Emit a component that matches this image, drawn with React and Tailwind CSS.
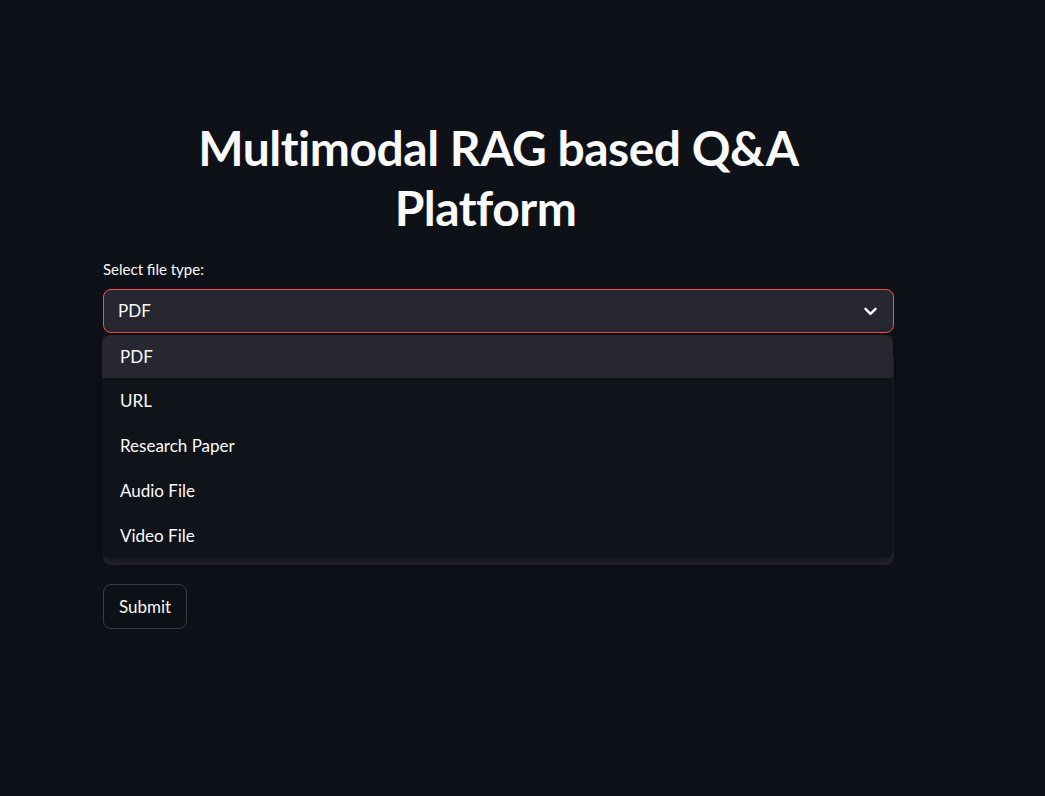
import React, { useState } from "react";

const options = ["PDF", "URL", "Research Paper", "Audio File", "Video File"];

function Chevron() {
  return (
    <svg width="13" height="9" viewBox="0 0 13 9" fill="none" stroke="#fafafa" strokeWidth="2.4" strokeLinecap="round" strokeLinejoin="round">
      <path d="M1.5 1.8l5 5 5-5" />
    </svg>
  );
}

export default function App() {
  const [selected] = useState("PDF");

  return (
    <div className="min-h-screen bg-[#0e1117] text-[#fafafa]" style={{ fontFamily: "Lato, 'Noto Sans', sans-serif" }}>
      <div className="ml-[103px] w-[791px] pt-[118px]">
        {/* Title */}
        <h1 className="text-center text-[48px] font-bold leading-[60px] tracking-[-0.5px]">
          Multimodal RAG based Q&amp;A Platform
          <span className="inline-block w-[26px]" />
        </h1>

        {/* Select */}
        <div className="mt-[21px]">
          <label className="mb-[10px] block text-[15px] leading-[20px]">Select file type:</label>
          <div className="relative">
            <div className="flex h-[44px] items-center justify-between rounded-lg border border-[#ff4b4b] bg-[#262730] pl-[14px] pr-[16px]">
              <span className="text-[17px]">{selected}</span>
              <Chevron />
            </div>

            {/* Dropdown menu */}
            <div className="absolute left-[-1px] top-[46px] z-10 w-[791px] overflow-hidden rounded-b-lg bg-[#10131a] shadow-[0_4px_12px_rgba(0,0,0,0.45)]">
              {options.map((o, i) => (
                <div
                  key={o}
                  className={
                    "flex items-center pl-[18px] text-[17px] " +
                    (i === 0 ? "h-[43px] rounded-t-lg bg-[#262730]" : "h-[45px]")
                  }
                >
                  {o}
                </div>
              ))}
            </div>
          </div>
        </div>

        {/* Uploader area (behind the menu) */}
        <div className="mt-[18px] h-[214px] rounded-lg bg-[#262730]" />

        {/* Submit */}
        <div className="mt-[19px]">
          <button className="h-[45px] rounded-lg border border-[#3b3d45] bg-[#0e1117] px-[15px] text-[17px]">
            Submit
          </button>
        </div>
      </div>
    </div>
  );
}
